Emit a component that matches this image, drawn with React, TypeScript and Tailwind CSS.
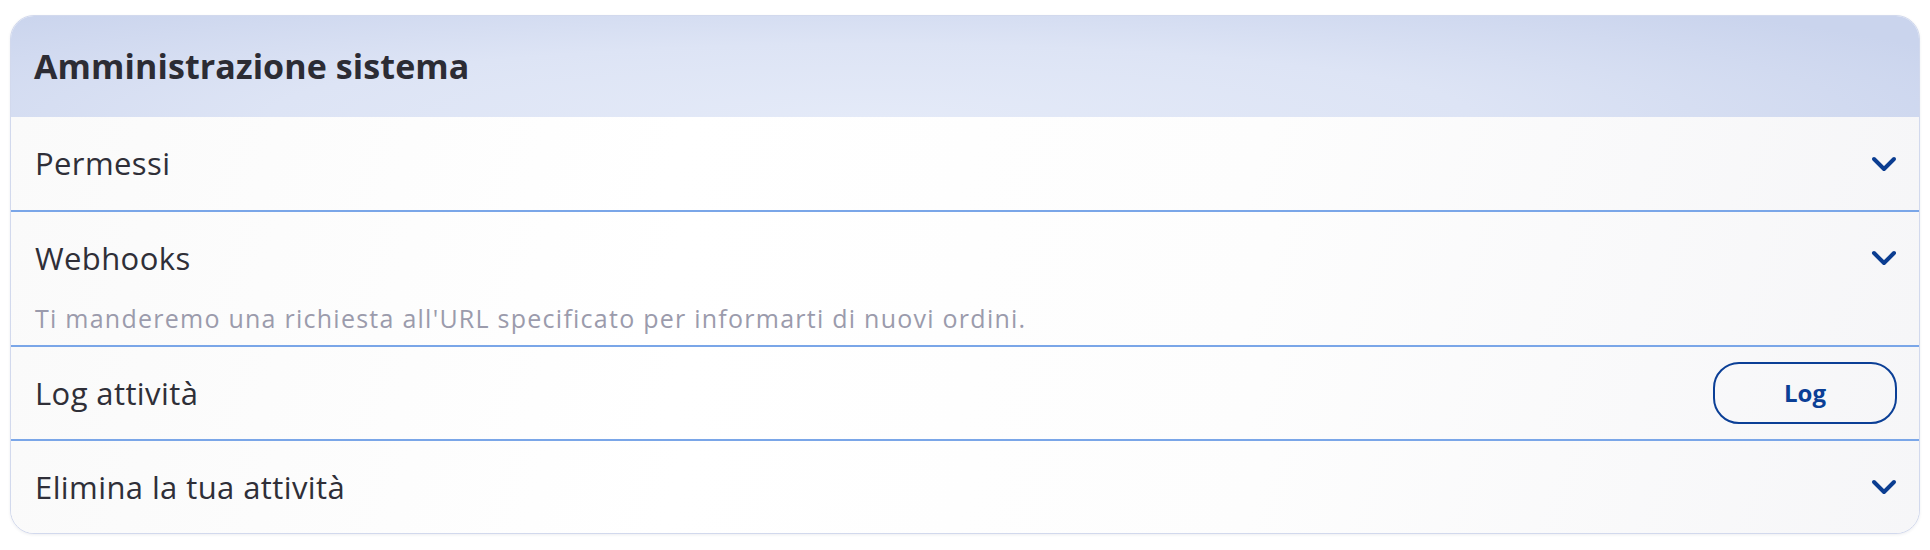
import React from "react";

const font = { fontFamily: '"Open Sans", "Noto Sans", sans-serif' };

function Chevron() {
  return (
    <svg width="26" height="16" viewBox="0 0 26 16" fill="none" className="shrink-0">
      <polyline points="3,3 13,13 23,3" stroke="#0b3d91" strokeWidth="4" strokeLinecap="round" strokeLinejoin="round" />
    </svg>
  );
}

const rowBg =
  "bg-[linear-gradient(105deg,#fafafa_0%,#ffffff_35%,#fdfdfd_65%,#f6f6f8_100%)]";

export default function App() {
  return (
    <div className="w-[1930px] h-[550px] bg-white pt-[15px] px-[10px]" style={font}>
      <div className="rounded-[24px] border border-[#d2d9ed] overflow-hidden shadow-[0_1px_3px_rgba(30,40,80,0.08)] bg-white">
        <div className="h-[101px] flex items-center pl-[23px] bg-[radial-gradient(ellipse_70%_160%_at_45%_100%,#e4eaf8_0%,#dde4f5_45%,#cad4ed_90%)]">
          <h1 className="text-[34px] font-bold text-[#2c2c34] tracking-[0.1px]">Amministrazione sistema</h1>
        </div>

        <div className={`h-[93px] flex items-center justify-between pl-[24px] pr-[22px] ${rowBg}`}>
          <span className="text-[31px] text-[#2f2f38] tracking-[0.4px]">Permessi</span>
          <Chevron />
        </div>

        <div className={`border-t-2 border-[#7aa6e8] flex flex-col pl-[24px] pr-[22px] pt-[31px] pb-[15px] ${rowBg}`}>
          <div className="flex items-center justify-between h-[30px]">
            <span className="text-[31px] leading-[30px] text-[#2f2f38] tracking-[0.4px]">Webhooks</span>
            <Chevron />
          </div>
          <p className="mt-[33px] text-[25px] leading-[24px] text-[#9b9bac] tracking-[1.25px]">
            Ti manderemo una richiesta all'URL specificato per informarti di nuovi ordini.
          </p>
        </div>

        <div className={`border-t-2 border-[#7aa6e8] h-[94px] flex items-center justify-between pl-[24px] pr-[22px] ${rowBg}`}>
          <span className="text-[31px] text-[#2f2f38] tracking-[0.4px]">Log attività</span>
          <button className="w-[184px] h-[62px] rounded-[26px] border-2 border-[#0b3f96] text-[#0b3f96] text-[24px] font-bold bg-transparent">
            Log
          </button>
        </div>

        <div className={`border-t-2 border-[#7aa6e8] h-[94px] flex items-center justify-between pl-[24px] pr-[22px] ${rowBg}`}>
          <span className="text-[31px] text-[#2f2f38] tracking-[0.4px]">Elimina la tua attività</span>
          <Chevron />
        </div>
      </div>
    </div>
  );
}
